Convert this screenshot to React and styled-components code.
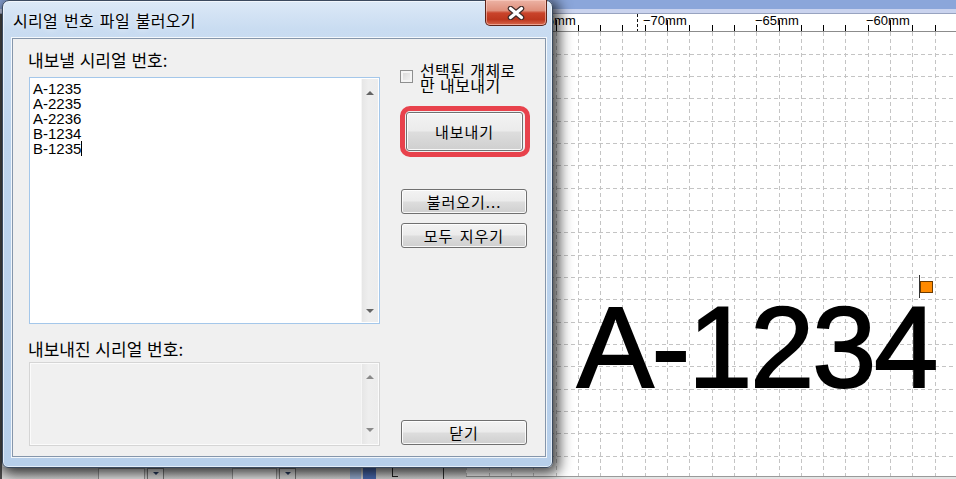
import React from 'react';
import styled, { createGlobalStyle } from 'styled-components';

const Global = createGlobalStyle`
  html, body { margin: 0; padding: 0; }
  body {
    width: 956px; height: 479px; overflow: hidden; background: #ffffff;
    font-family: "Noto Sans CJK KR", "Noto Sans", sans-serif;
  }
`;

const UI_FONT = `"Noto Sans CJK KR", "Noto Sans", sans-serif`;

/* ---------- background application ---------- */
const Screen = styled.div`
  position: relative;
  width: 956px;
  height: 479px;
  overflow: hidden;
  display: flex;
  flex-direction: column;
  background: #4a4a4a;
`;
const TopBand = styled.div`
  flex: none;
  height: 9px;
  background: #8ba6da;
`;
const TopLine = styled.div`
  flex: none;
  height: 4px;
  background: #cad3ee;
  border-bottom: 1px solid #98a3c0;
`;
const Workspace = styled.div`
  flex: 1;
  min-height: 0;
  display: flex;
`;
const SidePane = styled.div`
  flex: none;
  width: 464px;
  border-left: 2px solid #4c4c4c;
  background: #d6d6d6;
  display: flex;
  flex-direction: column;
  justify-content: flex-end;
`;
const SideToolbar = styled.div`
  flex: none;
  height: 11px;
  display: flex;
  align-items: flex-start;
  padding-top: 1px;
  background: linear-gradient(#c9c9c9, #dedede);
  overflow: hidden;
`;
const ComboField = styled.div`
  flex: none;
  width: ${p => p.$w}px;
  height: 14px;
  margin-left: ${p => p.$ml}px;
  background: #eeeeee;
  border: 1px solid #9a9a9a;
`;
const ComboArrow = styled.div`
  flex: none;
  width: 17px;
  height: 14px;
  margin-left: 2px;
  border: 1px solid #7d7d7d;
  background: linear-gradient(#f4f4f4, #d6d6d6);
  display: flex;
  justify-content: center;
  padding-top: 3px;
  box-sizing: border-box;
  &::after {
    content: "";
    border-left: 3px solid transparent;
    border-right: 3px solid transparent;
    border-top: 3px solid #2b3f66;
  }
`;
const Swatch = styled.div`
  flex: none;
  width: ${p => p.$w}px;
  height: 14px;
  margin-left: ${p => p.$ml}px;
  background: ${p => p.$c};
`;
const ToolTick = styled.div`
  flex: none;
  width: 5px;
  height: 8px;
  margin-left: ${p => p.$ml}px;
  border-left: 1px solid #222;
  border-bottom: 1px solid #222;
`;
const Divider = styled.div`
  flex: none;
  width: 1px;
  height: 12px;
  margin-left: ${p => p.$ml}px;
  background: #333;
`;

const Document = styled.div`
  flex: 1;
  min-width: 0;
  display: flex;
  flex-direction: column;
  background: #ffffff;
`;
const RulerSvg = styled.svg`
  flex: none;
  display: block;
  width: 490px;
  height: 17px;
  background: #ffffff;
  font-family: "Liberation Sans", Arial, sans-serif;
`;
const GridArea = styled.div`
  position: relative;
  flex: 1;
  min-height: 0;
  overflow: hidden;
  border-top: 1px solid #8c8c8c;
`;
const GridSvg = styled.svg`
  display: block;
  width: 490px;
  height: 445px;
`;
const BottomEdge = styled.div`
  flex: none;
  height: 2px;
  border-top: 1px solid #9a9a9a;
  background: #e4e4e4;
`;
const BigText = styled.div`
  position: absolute;
  left: 111px;
  top: 258px;
  font-family: "Liberation Sans", Arial, sans-serif;
  font-size: 115px;
  line-height: 115px;
  letter-spacing: -1.9px;
  color: #000;
  -webkit-text-stroke: 2px #000;
  white-space: nowrap;
`;
const Flag = styled.div`
  position: absolute;
  left: 453px;
  top: 243px;
  width: 15px;
  height: 23px;
  border-left: 1px solid #333;
  box-sizing: border-box;
  &::after {
    content: "";
    position: absolute;
    left: 0;
    top: 6px;
    width: 13px;
    height: 12px;
    background: #ff8a00;
    border: 1px solid #6b3a00;
    box-sizing: border-box;
  }
`;

/* ---------- dialog window ---------- */
const Window = styled.section`
  position: absolute;
  left: 2px;
  top: 0;
  width: 551px;
  height: 468px;
  box-sizing: border-box;
  display: flex;
  flex-direction: column;
  padding: 0 6px 10px 9px;
  border: 1px solid #3b4a5e;
  border-radius: 7px 7px 6px 6px;
  background: linear-gradient(180deg, #dce9f7 0%, #c9dcf1 6%, #bdd4ed 30%, #b7cfea 100%);
  box-shadow:
    inset 0 0 0 1px rgba(255, 255, 255, 0.6),
    3px 3px 14px 3px rgba(0, 0, 0, 0.75);
`;
const TitleBar = styled.header`
  flex: none;
  height: 37px;
  display: flex;
  align-items: flex-start;
  justify-content: space-between;
`;
const Title = styled.h1`
  margin: 0;
  padding: 9px 0 0 1px;
  font: 400 16px/20px ${UI_FONT};
  letter-spacing: 0.3px;
  word-spacing: 2px;
  color: #000;
  text-shadow: 0 0 6px rgba(255, 255, 255, 0.95);
`;
const CloseButton = styled.button`
  flex: none;
  width: 62px;
  height: 26px;
  margin: -1px -1px 0 0;
  padding: 0;
  border: 1px solid #5e2419;
  border-top: none;
  border-radius: 0 0 5px 5px;
  background: linear-gradient(180deg, #ecb3a5 0%, #df8f7b 42%, #c9432a 52%, #bd371e 78%, #d8684c 100%);
  box-shadow: inset 0 0 0 1px rgba(255, 214, 204, 0.55);
  display: flex;
  align-items: center;
  justify-content: center;
`;
const Client = styled.div`
  flex: 1;
  min-height: 0;
  display: flex;
  background: #f0f0f0;
  border: 1px solid #8596ab;
  box-shadow: 0 0 0 1px rgba(255, 255, 255, 0.8);
`;
const LeftColumn = styled.div`
  flex: none;
  width: 351px;
  padding: 11px 0 0 16px;
  display: flex;
  flex-direction: column;
`;
const FieldLabel = styled.div`
  font: 400 17px/20px ${UI_FONT};
  word-spacing: 1px;
  color: #000;
  margin-top: ${p => p.$mt || 0}px;
  margin-left: -1px;
`;
const EditBox = styled.div`
  box-sizing: border-box;
  height: ${p => p.$h}px;
  margin-top: ${p => p.$mt}px;
  display: flex;
  border: 1px solid ${p => (p.$disabled ? '#d5d5d5' : '#a4c7ea')};
  background: ${p => (p.$disabled ? '#f0f0f0' : '#ffffff')};
  box-shadow: ${p => (p.$disabled ? 'inset 0 0 0 1px #fbfbfb' : 'none')};
`;
const EditText = styled.div`
  flex: 1;
  padding: 3px 0 0 3px;
  font: 400 15px/15px "Liberation Sans", Arial, sans-serif;
  color: #000;
`;
const EditLine = styled.div`
  white-space: pre;
  height: 15px;
`;
const Caret = styled.span`
  display: inline-block;
  width: 1px;
  height: 15px;
  vertical-align: top;
  background: #000;
`;
const ScrollTrack = styled.div`
  flex: none;
  width: 17px;
  margin: 1px 1px 1px 0;
  box-sizing: border-box;
  padding: ${p => p.$pad};
  display: flex;
  flex-direction: column;
  justify-content: space-between;
  align-items: center;
  background: linear-gradient(90deg, #e6e6e6, #eeeeee 40%, #ececec);
  border-left: 1px solid #f6f6f6;
`;
const Arrow = styled.span`
  width: 0;
  height: 0;
  border-left: 4px solid transparent;
  border-right: 4px solid transparent;
  ${p => (p.$down ? 'border-top' : 'border-bottom')}: 4px solid ${p => p.$c};
`;

const RightColumn = styled.div`
  flex: none;
  width: 126px;
  margin-left: 21px;
  padding: 24px 0 11px;
  display: flex;
  flex-direction: column;
`;
const CheckRow = styled.label`
  display: flex;
  align-items: flex-start;
  gap: 7px;
  margin-left: -1px;
  font: 400 16px/15px ${UI_FONT};
  letter-spacing: 0.4px;
  word-spacing: 1px;
  color: #000;
`;
const CheckBox = styled.span`
  flex: none;
  width: 13px;
  height: 13px;
  margin-top: 7px;
  box-sizing: border-box;
  border: 1px solid #8e8f8f;
  background: linear-gradient(135deg, #d4d4d4, #f6f6f6);
  box-shadow: inset 0 0 0 2px #f4f4f4;
`;
const Highlight = styled.div`
  margin: 13px 0 0 -1px;
  width: 130px;
  height: 51px;
  box-sizing: border-box;
  border: 5px solid #e8424c;
  border-radius: 10px;
  padding: 1px 2px 1px 1px;
  display: flex;
`;
const PushButton = styled.button`
  box-sizing: border-box;
  width: ${p => (p.$fill ? 'auto' : '126px')};
  flex: ${p => (p.$fill ? '1' : 'none')};
  height: ${p => (p.$fill ? 'auto' : '25px')};
  margin-top: ${p => (p.$mt === 'auto' ? 'auto' : `${p.$mt || 0}px`)};
  padding: 0;
  border: 1px solid #707070;
  border-radius: 3px;
  background: linear-gradient(180deg, #f3f3f3 0%, #ebebeb 48%, #dddddd 52%, #cfcfcf 100%);
  box-shadow: inset 0 0 0 1px rgba(255, 255, 255, 0.85);
  font: 400 15px/20px ${UI_FONT};
  letter-spacing: 1px;
  word-spacing: 2px;
  color: #000;
  text-align: center;
`;

function Ruler() {
  const items = [];
  for (let k = -9; k <= 13; k++) {
    const x = Math.round(201 + 22.3 * k) + 0.5;
    if (x < 0 || x > 490) continue;
    const major = k % 5 === 0;
    items.push(
      <line key={`t${k}`} x1={x} x2={x} y1={major ? 6 : 11} y2={17} stroke="#000" strokeWidth="1" />
    );
    if (major) {
      items.push(
        <text key={`l${k}`} x={x - 24.5} y={11} fontSize="13" fill="#000">
          {`\u2212${70 - k}mm`}
        </text>
      );
    }
  }
  return (
    <RulerSvg viewBox="0 0 490 17">
      {items}
      <line x1="171.5" x2="171.5" y1="0" y2="17" stroke="#111" strokeDasharray="3 2" />
    </RulerSvg>
  );
}

function Grid() {
  const lines = [];
  for (let k = -9; k <= 13; k++) {
    const x = Math.round(201 + 22.3 * k) + 0.5;
    if (x < 0 || x > 490) continue;
    lines.push(<line key={`v${k}`} x1={x} x2={x} y1="0" y2="445" />);
  }
  for (let k = -1; k <= 19; k++) {
    const y = Math.round(44 + 22.33 * k) + 0.5;
    if (y < 0 || y > 445) continue;
    lines.push(<line key={`h${k}`} x1="0" x2="490" y1={y} y2={y} />);
  }
  return (
    <GridSvg viewBox="0 0 490 445">
      <g stroke="#c4c4c4" strokeWidth="1" strokeDasharray="4 3">{lines}</g>
    </GridSvg>
  );
}

const serials = ['A-1235', 'A-2235', 'A-2236', 'B-1234', 'B-1235'];

export default function App() {
  return (
    <>
      <Global />
      <Screen>
        <TopBand />
        <TopLine />
        <Workspace>
          <SidePane>
            <SideToolbar>
              <ComboField $w={45} $ml={96} />
              <ComboArrow />
              <ComboField $w={43} $ml={68} />
              <ComboArrow />
              <Swatch $w={11} $ml={54} $c="#9fb6dc" />
              <Swatch $w={13} $ml={2} $c="#4d6fb8" />
              <ToolTick $ml={16} />
              <Divider $ml={45} />
            </SideToolbar>
          </SidePane>
          <Document>
            <Ruler />
            <GridArea>
              <Grid />
              <BigText>A-1234</BigText>
              <Flag />
            </GridArea>
            <BottomEdge />
          </Document>
        </Workspace>

        <Window>
          <TitleBar>
            <Title>시리얼 번호 파일 불러오기</Title>
            <CloseButton aria-label="닫기">
              <svg width="18" height="14" viewBox="0 0 18 14">
                <path d="M3.5 2.5 L14.5 11.5 M14.5 2.5 L3.5 11.5" stroke="#3e2a28" strokeWidth="5.5" strokeLinecap="round" />
                <path d="M3.5 2.5 L14.5 11.5 M14.5 2.5 L3.5 11.5" stroke="#ffffff" strokeWidth="3.2" strokeLinecap="round" />
              </svg>
            </CloseButton>
          </TitleBar>
          <Client>
            <LeftColumn>
              <FieldLabel>내보낼 시리얼 번호:</FieldLabel>
              <EditBox $h={247} $mt={7}>
                <EditText>
                  {serials.map((s, i) => (
                    <EditLine key={s}>
                      {s}
                      {i === serials.length - 1 && <Caret />}
                    </EditLine>
                  ))}
                </EditText>
                <ScrollTrack $pad="12px 0 9px">
                  <Arrow $c="#646464" />
                  <Arrow $down $c="#646464" />
                </ScrollTrack>
              </EditBox>
              <FieldLabel $mt={15}>내보내진 시리얼 번호:</FieldLabel>
              <EditBox $h={84} $mt={3} $disabled>
                <EditText />
                <ScrollTrack $pad="11px 0 12px">
                  <Arrow $c="#8a8a8a" />
                  <Arrow $down $c="#8a8a8a" />
                </ScrollTrack>
              </EditBox>
            </LeftColumn>
            <RightColumn>
              <CheckRow>
                <CheckBox />
                <span>
                  선택된 개체로
                  <br />
                  만 내보내기
                </span>
              </CheckRow>
              <Highlight>
                <PushButton $fill>내보내기</PushButton>
              </Highlight>
              <PushButton $mt={32}>불러오기...</PushButton>
              <PushButton $mt={9}>모두 지우기</PushButton>
              <PushButton $mt="auto">닫기</PushButton>
            </RightColumn>
          </Client>
        </Window>
      </Screen>
    </>
  );
}
